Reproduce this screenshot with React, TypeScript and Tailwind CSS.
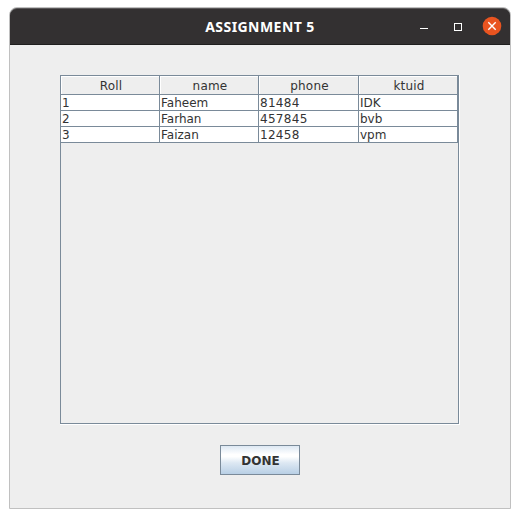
const columns = ["Roll", "name", "phone", "ktuid"];

const rows = [
  ["1", "Faheem", "81484", "IDK"],
  ["2", "Farhan", "457845", "bvb"],
  ["3", "Faizan", "12458", "vpm"],
];

const grid = "grid grid-cols-[99px_99px_100px_99px]";

function TitleBar() {
  return (
    <header className="grid h-[37px] shrink-0 grid-cols-[1fr_auto_1fr] items-center rounded-t-[7px] border-t border-b border-t-[#5a5859] border-b-[#1f1e1e] bg-[#333031] pr-[8px]">
      <span />
      <h1 className="ml-[8px] w-[110px] text-center font-['Noto_Sans',sans-serif] text-[14px] leading-[20px] font-bold tracking-[0.45px] whitespace-nowrap text-white">
        ASSIGNMENT 5
      </h1>
      <div className="flex items-center justify-end">
        <button aria-label="Minimize" className="mr-[26px] block">
          <svg width="8" height="8" viewBox="0 0 8 8" shapeRendering="crispEdges">
            <rect y="5" width="8" height="1" fill="#fff" />
          </svg>
        </button>
        <button aria-label="Maximize" className="mr-[20px] block">
          <svg width="8" height="8" viewBox="0 0 8 8" shapeRendering="crispEdges">
            <path d="M0 0h8v8H0zM1 1v6h6V1z" fill="#fff" fillRule="evenodd" />
          </svg>
        </button>
        <button aria-label="Close" className="mb-[2px] block">
          <svg width="20" height="20" viewBox="0 0 20 20">
            <circle cx="10" cy="10" r="9.3" fill="#e95420" />
            <path d="M6.3 6.3l7.4 7.4M13.7 6.3l-7.4 7.4" stroke="#fff" strokeWidth="1.4" />
          </svg>
        </button>
      </div>
    </header>
  );
}

function Table() {
  return (
    <div className="border-r border-b border-white">
      <div className="h-[349px] w-[399px] border border-[#7a8a99]">
        <div className={grid}>
          {columns.map((name) => (
            <div
              key={name}
              className="h-[19px] border-r border-b border-[#7a8a99]"
            >
              <div className="h-[18px] border-t border-l border-white pl-px text-center leading-[19px] tracking-[0.2px]">
                {name}
              </div>
            </div>
          ))}
        </div>
        {rows.map((row) => (
          <div key={row[0]} className={grid}>
            {row.map((cell, column) => (
              <div
                key={cell}
                className={`h-4 border-r border-b border-[#7a8a99] bg-white pl-px leading-[17px] ${
                  column === 2 ? "tracking-[0.3px]" : ""
                }`}
              >
                {cell}
              </div>
            ))}
          </div>
        ))}
      </div>
    </div>
  );
}

export default function App() {
  return (
    <div className="h-[518px] w-[520px] bg-white pt-[7px] pl-[9px] font-['DejaVu_Sans',sans-serif] text-[12px] text-[#333333]">
      <main className="flex h-[502px] w-[502px] flex-col rounded-t-[8px] border border-[#c0c0c0] bg-[#eeeeee]">
        <TitleBar />
        <div className="flex flex-col items-start pt-[30px] pl-[50px]">
          <Table />
          <button className="mt-[20px] ml-[160px] h-[30px] w-[80px] border border-[#7a8a99] bg-[linear-gradient(#dde8f3_0%,#ffffff_30%,#ffffff_38%,#dde8f3_60%,#b8cfe5_100%)] pt-px pl-px text-center leading-[28px] font-bold">
            DONE
          </button>
        </div>
      </main>
    </div>
  );
}
